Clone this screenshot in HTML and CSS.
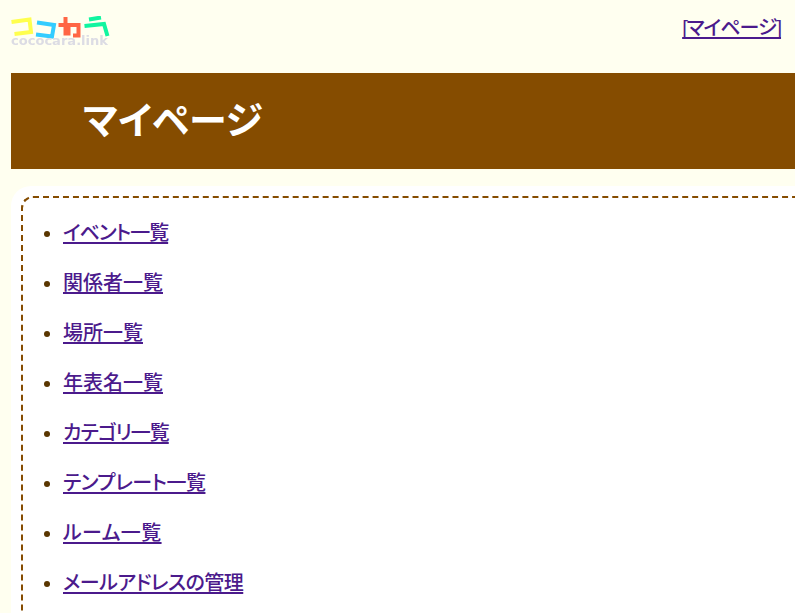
FILE: index.html
```html
<!DOCTYPE html>
<html lang="ja">
<head>
    <meta charset="utf-8">
    <title>マイページ</title>
    <link rel="stylesheet" href="styles.css">
</head>
<body>
    <div id="header">
        <a class="logo" href="#">
            <svg width="100" height="32" viewBox="0 0 100 32">
                <g fill="none" stroke-width="4">
                    <path d="M0.5 6 L18.5 3.5 L20 16 L3.5 18" stroke="#ffff4d"/>
                    <path d="M26 6.5 L43 9 L41 20.5 L25 18.5" stroke="#33ccff"/>
                    <path d="M47.5 9 L67.5 9 L67.5 19.5 L62 19.5 M54.5 1 L54.5 19.5 M57.5 9 L57.5 19.5" stroke="#ff6644"/>
                    <path d="M78 3.5 L90 1.5 M73.5 10 L93 8 L96.5 20" stroke="#11f5a0"/>
                </g>
                <text class="logo-text" x="0" y="29" textLength="97" lengthAdjust="spacingAndGlyphs">cococara.link</text>
            </svg>
        </a>
        <a class="mypage tight" href="#">[マイページ]</a>
    </div>

    <h1 id="title">マイページ</h1>

    <div id="content">
        <ul class="menu">
            <li><a class="tight" href="#">イベント一覧</a></li>
            <li><a href="#">関係者一覧</a></li>
            <li><a href="#">場所一覧</a></li>
            <li><a href="#">年表名一覧</a></li>
            <li><a class="tight" href="#">カテゴリ一覧</a></li>
            <li><a class="snug" href="#">テンプレート一覧</a></li>
            <li><a class="loose" href="#">ルーム一覧</a></li>
            <li><a class="snug" href="#">メールアドレスの管理</a></li>
        </ul>
    </div>
</body>
</html>
```

FILE: styles.css
```css
html, body {
    height: 100%;
}

body {
    margin: 0;
    padding-left: 11px;
    background-color: #fffff0;
    color: #5a3600;
    font-family: "Liberation Sans", "Noto Sans CJK JP", sans-serif;
    font-size: 20px;
    font-feature-settings: "palt";
    overflow: hidden;
}

a {
    color: #4b1a8c;
    font-weight: 500;
    text-decoration-thickness: 2px;
    text-decoration-skip-ink: none;
    text-underline-offset: 2px;
}

.tight {
    letter-spacing: -1px;
}

.snug {
    letter-spacing: -0.5px;
}

.loose {
    letter-spacing: 0.4px;
}

#header {
    display: flex;
    justify-content: space-between;
    height: 73px;
    padding-right: 14px;
}

.logo {
    display: block;
    margin-top: 16px;
    height: 32px;
}

.logo svg {
    display: block;
    filter: blur(0.6px);
}

.logo-text {
    font-family: "DejaVu Sans", sans-serif;
    font-size: 12px;
    font-weight: bold;
    fill: #dcdce4;
}

.mypage {
    margin-top: 15px;
    line-height: 26px;
    height: 26px;
}

#title {
    margin: 0;
    height: 96px;
    padding-left: 72px;
    background-color: #854c00;
    color: #fff;
    font-size: 38px;
    font-weight: bold;
    line-height: 96px;
}

#content {
    margin-top: 17px;
    padding: 10px 0 0 10px;
    background-color: #fff;
    border-radius: 20px 0 0 0;
}

.menu {
    margin: 0;
    padding: 22px 0 0 40px;
    border: 2px dashed #854c00;
    border-right: none;
    border-bottom: none;
    border-radius: 12px 0 0 0;
    list-style: disc;
}

.menu li {
    height: 50px;
    line-height: 26px;
}

.menu li::marker {
    font-size: 20px;
}
```
